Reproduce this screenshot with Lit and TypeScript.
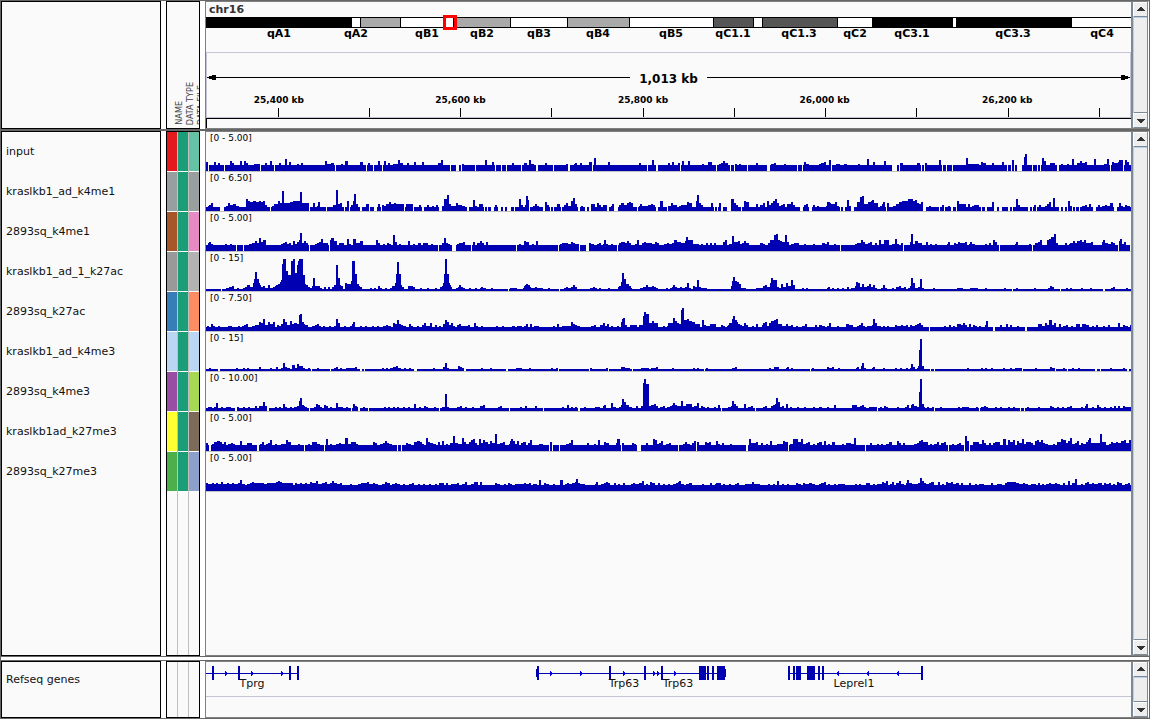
import { LitElement, html, svg, css } from "lit";
import { customElement, property } from "lit/decorators.js";

/** Width of the displayed locus in bins. */
const BINS = 925;
/** Signal bins are stored in three tiles; each starts at this bin. */
const TILE_START = [-6, 304, 614];
const pct = (x: number) => `${(x / BINS) * 100}%`;

interface Track {
  name: string;
  range: string;
  colors: string[];
  base: number;
  /** "bin:height[:width]" entries; a height of 0 is a gap in coverage. */
  tiles: string[];
}

const GREEN = "#1b9e77";

const TRACKS: Track[] = [
  {
    name: "input", range: "[0 - 5.00]", colors: ["#e41a1c", GREEN, "#66c2a5"], base: 6,
    tiles: [
      "6:9 8:0:1 14:9 18:8 24:0:1 30:10 32:8 40:10 44:10 46:8 54:7:6 60:0:1 65:8 70:10 74:0:1 79:8 85:12 89:9 97:7 101:8 125:10 128:7 131:8:3 135:0:1 141:7 145:10:3 160:9:3 166:0:1 168:8 173:0:1 178:10 182:0:1 184:10 188:8 193:7:6 198:11 201:8 207:8 214:9 222:9 238:8:3 241:11 250:0:1 256:0:3 261:0:1 262:7 275:0:1 285:11 292:9 295:0:1 301:0:1 306:0:1 312:8",
      "2:8 11:0:1 14:8:3 19:11 21:7:3 26:0:2 35:8 43:0:1 56:7 58:0:2 64:7 65:8 70:8 79:9:3 82:0:1 84:13 98:9 129:8 137:0:1 142:11 146:0:2 158:8 162:9 168:8 170:0:1 172:10 178:10 192:7 198:9:4 206:0:1 209:7 211:8 213:10 216:8 220:0:1 224:0:1 225:7 229:7 237:0:1 246:8 257:0:3 261:7 264:8 274:7 287:0:1 292:0:1 294:9 297:7 309:7 311:8 314:9 319:11",
      "1:8 4:9 9:11 11:0:1 16:7:4 24:7:3 38:7 47:12 53:9 64:10 72:0:5 79:0:1 80:8:3 97:8:3 101:0:1 104:0:1 105:8 119:11 122:0:1 126:0:1 132:0:1 146:13 148:7:11 161:9 164:8 172:8 182:9 187:0:1 191:0:1 192:11 194:0:1 197:0:5 204:14 205:17 212:0:1 217:0:1 220:0:1 222:13 224:10 230:8 233:8 237:0:2 241:7 247:7 252:12 257:8 260:10 263:8 265:9 274:12 284:7 287:12 290:0:1 292:9 295:8 298:9 299:11:4 303:0:1 305:11 307:9 309:6:2",
    ],
  },
  {
    name: "kraslkb1_ad_k4me1", range: "[0 - 6.50]", colors: ["#999e9f", GREEN, "#999e9f"], base: 4,
    tiles: [
      "8:5 9:6 11:8 20:0:4 26:5 28:8 31:6:3 33:7:3 36:5:3 46:12 48:10 50:9 53:10:3 56:9 58:6 59:10 61:9 63:10 65:6 70:0:1 72:5 74:7:4 78:10 80:8:2 82:20 84:8 87:8:3 90:9 93:10:3 96:7 97:10 100:19 102:8:6 107:8 109:0:1 113:8 117:5 118:9 126:0:1 133:6 136:21 138:7 140:8 144:0:1 147:10 149:0:1 151:6 153:10 154:17 156:7 160:0:2 166:7:3 169:0:1 174:0:3 178:7 181:0:1 182:6 184:5 186:7 189:9 191:7 194:8 196:7:8 204:0:1 206:7 209:7:4 213:0:1 219:6 222:0:2 227:6 232:5 236:6 239:0:3 242:5 244:12:3 247:16 249:7 252:5:5 256:8 257:6:5 263:5 267:0:2 273:11 275:5 279:7:4 284:0:1 287:0:1 291:0:3 295:6 298:0:3 303:0:2 307:0:4 314:0:1 319:12",
      "0:0:1 4:0:1 9:12 11:6 15:6 16:15 18:11 19:0:1 23:5 25:7 27:5 33:0:2 35:9 37:6 40:0:1 43:0:1 47:7:3 51:0:1 54:6 56:8 58:5 61:10 63:13 65:7:2 68:0:2 71:5 75:0:2 79:0:2 81:7:4 87:8 89:6 93:6:4 97:0:2 101:5 102:7 104:0:4 109:6 111:8:3 115:6 117:8 119:9 121:8 127:0:1 129:5 130:7 133:5:6 138:6 141:7 143:6 146:0:2 150:10:3 157:0:1 158:5 161:8 163:6:4 169:5 171:6:6 177:9 180:8 186:10 187:16 189:8 191:6 201:8 204:0:1 207:0:1 209:8 211:0:2 217:0:4 221:12:3 224:8 226:6 231:0:1 234:10 236:7 237:9 246:7 250:6 253:8 257:10 259:6 261:8 263:10 265:12 267:8 269:5 271:6 273:7 277:7 280:7 281:9 283:6 290:0:3 294:6 296:7 299:0:3 303:6 307:5 316:5 318:9",
      "7:9 9:8 12:7 15:9 17:5 20:0:1 23:0:2 27:11 29:5 31:0:3 37:9 40:14 42:15 44:7:2 46:7 48:9 51:10 52:11 54:8 56:8 60:5 62:7 63:9 66:0:1 67:8 73:5 76:7 78:6 79:9 81:7 82:10 85:10 88:12 91:12 93:10 95:11 97:8 99:7 101:9 103:0:3 109:5 119:0:1 122:6 124:0:1 128:5 131:0:2 136:0:1 137:10 139:7:7 148:7 152:5 154:6 157:6 161:0:1 165:0:2 172:9 174:0:3 179:0:3 188:0:2 192:0:1 196:12 198:6 208:0:2 212:0:1 214:6 216:0:1 219:6 225:5 227:7 229:9 233:13 235:4 239:0:2 243:0:2 247:0:1 248:10 250:5 252:0:1 255:0:1 259:0:1 262:5 265:6 269:7 273:0:3 278:6 282:5 285:6 287:5 290:8:3 294:0:3 299:8 301:5 305:6 308:5",
    ],
  },
  {
    name: "2893sq_k4me1", range: "[0 - 5.00]", colors: ["#a65628", GREEN, "#e78ac3"], base: 6,
    tiles: [
      "8:8 9:9 11:7 25:7 30:7 36:0:1 43:0:1 49:7 52:8:3 55:10 57:8 59:13 61:9 63:11:3 81:7 83:8 85:9 88:7 89:8 93:10 95:7 97:9 99:11 100:18 102:8 104:10 106:8 109:0:1 115:7 117:8 119:9 121:12 123:8 126:8 129:0:1 130:11 131:13:3 135:10 139:8 142:8 147:12 149:7 153:12:3 157:8 160:10:3 176:11 178:8 183:7 187:8 189:7 193:16 195:9 199:7 208:10 213:7 218:8:3 223:8 226:8 231:7 238:0:1 242:8 244:13 246:8 248:7 252:0:4 257:7 259:8:5 263:9 271:0:1 273:9 277:8 280:10 282:8 286:9 316:0:1",
      "6:0:1 9:7 14:10 17:9 22:7 26:10 48:0:1 50:7 52:8:2 54:8:4 59:7 61:9 63:8 65:7:4 69:0:1 76:0:3 79:8 82:7 87:7 89:8 93:7 94:11 96:7 101:7 107:0:1 109:8 111:9:4 116:8 117:10 119:8 125:7 127:11 132:8 134:9 136:8:6 143:7 145:9 147:8 154:7 157:8 160:7 162:8 164:11:3 167:9:4 171:8:4 175:10 176:14 178:11 181:11 183:7:6 191:7 196:8 200:8 204:8 213:9 215:11 219:7 222:15 224:9 226:9 228:10 230:7 232:8 234:10 237:8 250:8:3 253:7 258:8 260:11:3 264:16 266:17 268:11 270:10 272:9 275:16 277:9 281:7 284:8 287:8 294:7 303:7 312:8 315:7 317:9",
      "3:8 7:9 14:7 20:0:1 35:7 37:8 40:8 41:11 43:9 45:7 48:8 50:9 55:8 59:11 61:7 64:11 67:11 72:7:2 75:12 77:7 81:8 83:0:1 90:9 91:17 93:7 95:10:3 99:8:3 106:9 110:7 115:7 127:7 128:9 134:8 136:7 138:9 141:8:6 145:9 149:7 150:9 153:7 165:7 169:8 173:11 175:9 179:0:1 195:7 196:9 209:7 212:0:1 215:8 218:9 220:11 227:11 229:12 231:14 234:17 236:8 245:8 249:7 250:8 253:10 255:8 257:10 260:11 262:9 264:11 266:8:5 271:9 282:9 283:11 286:8 289:7 291:9 293:8 298:0:1 299:10 300:12 302:7 304:9 310:0:1",
    ],
  },
  {
    name: "kraslkb1_ad_1_k27ac", range: "[0 - 15]", colors: ["#999999", GREEN, "#b3b3b3"], base: 2,
    tiles: [
      "21:0:1 26:3 29:4 32:5 37:3 43:3 45:4 47:6:3 50:4 53:8 54:12 55:19 57:12 58:8 59:6 60:4 63:5 66:3 68:6 70:3 73:4 75:5 76:6 78:7 80:9 81:11 82:27 83:32:3 86:20 87:16:5 91:30 93:32:2 95:18 96:16 97:26 98:30 99:32:4 103:16 104:7 106:6 108:4 110:3 112:5 113:13 115:5 117:3 118:5 120:3 124:4 128:4 132:4 134:6 136:26 138:13 139:6 141:5 145:8 147:7 150:7 151:10 152:30:3 155:17 157:7 158:5 160:4 170:3 174:3 178:5 180:3 185:3 190:3 192:5 194:5 195:8 196:17 197:29 199:17 200:6 202:4 208:5 210:3 211:5 213:4 220:3 227:3 235:3 240:4 242:5 243:8 244:17 245:32 247:17 248:8 249:6 250:4 256:3 258:4 259:6 261:4 263:3 269:3 275:3 280:3 281:4 284:3 291:3 308:0:1 312:3",
      "0:3 5:3 13:3 14:5 15:6 16:7 18:6 19:4 21:3 24:3 25:4 28:3 31:3 38:3 49:0:1 54:3 56:4 59:3 61:4 63:6 65:4 80:3 83:4 85:3 89:3 98:3 108:4 109:5 111:9 112:18 114:12 115:5 117:7 119:5 120:3 130:3 133:4 135:4 136:6 139:4 141:3 142:5 144:4 146:3 156:3 160:3 162:4 163:6 165:4 167:3 170:4 172:3 175:4 177:8 179:3 183:5 186:4 187:11 189:4 192:3 195:3 221:5 222:10 223:14 225:10 227:9 229:7 230:3:6 246:3 249:3 252:3 253:5 255:6 257:4 259:3 260:8 261:13 263:8 264:11:3 267:4 269:3 271:7 273:4 275:4 276:8 278:5 280:5 281:11 283:6 292:3 296:3 317:3 318:4",
      "7:3 8:4 12:3 17:3 22:3 27:4 31:3 34:3 35:5 36:9 38:8 40:4 42:7 44:4 47:5 49:7 51:4 53:6 55:3 61:3 63:6 65:3 72:3 76:4 79:5 81:3 84:4 88:3 90:5 91:13 93:8 95:3 98:4 100:12 102:3 113:3 137:3:6 150:3:5 156:3 165:3 184:3 192:0:1 196:3 214:3 228:3 230:5 232:4 240:0:1 246:3 250:3 261:3 270:3 283:0:2 291:3 293:4 306:3",
    ],
  },
  {
    name: "2893sq_k27ac", range: "[0 - 7.50]", colors: ["#377eb8", GREEN, "#fc8d62"], base: 4,
    tiles: [
      "7:5 11:7 13:5 18:5 28:5:4 38:5 42:5 44:6 46:7 52:5 55:6 57:6 59:9 61:8 63:12 65:6 68:9 71:7 73:9 77:6 79:5 81:7 83:12 85:9 87:6 90:10 92:7 94:8:3 97:7 99:16 100:17 102:9 103:7 105:6:3 112:5 115:6 117:7 119:5 123:5 129:5 134:5 136:12 138:8 144:5 150:5 152:7 153:9 160:5 165:5 172:5 177:5 183:5 186:6 189:5 193:8 195:7 197:11 199:7 201:6 204:5 209:7 211:5 217:5 222:6 224:8 227:5 230:8 235:6 239:5 243:7 245:11 247:9 250:6 251:8 253:5 257:6 259:7 262:5 265:5 268:6 274:8 276:5 281:5 296:5 302:5 313:5 317:5",
      "2:5 7:5:5 14:5 16:7 20:7 24:5 27:5 43:5 47:7 52:5 55:5 58:5 61:9 63:7 65:6 68:5 81:5 84:6 90:6 93:8 95:5 97:7 101:5 107:5 111:9 112:12 113:13 115:6 120:6 122:6 125:6 129:6 131:6 133:15 134:19 136:17:3 139:8 142:10 144:8 146:8 153:5 157:5 158:8 160:8 162:8 163:13 165:10 167:8 169:7 171:21 172:23 174:11 175:8 177:12 179:7 180:10 182:6 183:9 185:7:5 192:11 194:6 197:5 200:7 202:5 203:7:3 211:6 213:5 217:5 218:6 219:8 221:8 222:12 223:15 225:11 226:9 228:7 230:6 232:5 234:8 236:6 242:5 246:7 252:6 253:8 255:9 257:5 259:8 261:10 263:6 264:11 266:12 268:7 270:7 273:5 276:7 278:5 281:6 286:5 292:5 295:7 305:6 309:6 313:5 319:8",
      "0:6 3:5 7:5 9:8 17:5 26:7:3 29:6 31:6 37:5 39:6 41:8 43:5 47:5 50:5 52:6 53:12 55:8 56:5 59:5 63:5 67:5 75:6 78:5 81:6 84:5 86:6 90:6 93:5 95:6 97:7 99:8 101:6 109:0:1 124:5 129:6 133:5 137:7:4 141:6 143:8 145:6 149:7 153:6 155:5 159:5 165:6 166:10 173:0:2 180:6 186:7 190:6 197:5 205:0:2 218:7:4 222:5 225:8 227:6 229:11:3 232:6 234:8 239:7 243:5 246:6 251:5 256:7:4 262:7:4 267:6 272:5 276:6 283:5 288:6 298:8 303:6 306:5 310:6",
    ],
  },
  {
    name: "kraslkb1_ad_k4me3", range: "[0 - 15]", colors: ["#bad6f3", GREEN, "#bad6f3"], base: 2,
    tiles: [
      "9:3 18:0:2 36:3 43:3 47:3 59:4 70:3 76:4 81:3 83:8 85:4 88:3 92:6:3 95:3 97:7 99:5:4 103:3 108:3 111:0:1 117:3 130:0:1 134:3 136:4 140:3 146:3 148:3 151:3 153:3 155:4 160:0:2 164:0:1 182:3 186:3 190:3 193:4 196:5 199:3 204:3 209:3 214:0:3 233:3 243:4 245:8 247:3 258:5 260:4 262:3 264:0:2 281:3 290:3 306:0:2 317:3",
      "6:3 10:3 19:3 41:3 46:3 48:0:1 79:0:1 80:3 96:3 98:0:1 111:4:4 116:3:4 122:0:1 131:3 134:3 137:3 141:3 143:3 146:4 162:3 183:3 187:3 194:0:1 196:3 222:3 225:4 259:3 264:4:5 276:3 277:4 281:3 300:0:1 302:3 317:4",
      "7:4 10:3 12:4 18:3 36:3 37:4 41:5 42:8 44:3 52:3 53:4 63:3 75:3 80:3 86:3 90:3 91:7 93:4 97:3 98:5 99:21 100:32:2 102:5 103:2 110:0:1 114:0:1 147:3 161:3 165:3 171:3 183:3 190:3 195:3:7 202:0:1 215:3 230:4 233:3 235:0:1 243:3 247:0:1 252:3 258:3 275:0:2 280:0:1 290:3 303:3 307:0:2",
    ],
  },
  {
    name: "2893sq_k4me3", range: "[0 - 10.00]", colors: ["#984ea3", GREEN, "#a6d854"], base: 3,
    tiles: [
      "8:4 10:4 14:4 16:8 21:4 26:4 29:4 35:0:2 37:4 43:4 48:4 55:5 59:5 61:5 63:9 65:5 67:0:2 75:4 79:4 83:7 85:4 90:4 94:4 97:5 99:10 100:13 102:6 103:5 105:4 109:0:1 114:4 116:7 118:6 120:4 124:6 126:5 130:4 136:8 138:4 141:4 146:4 151:0:1 153:7 155:5 157:4 158:0:2 163:4 168:0:1 184:4 188:4 193:4 197:4 203:4 208:4 214:7 219:4 224:5 226:4 234:4 239:0:1 242:4 245:17 247:4 257:4 260:5 265:4 272:4 280:5 283:6 298:4 300:5 309:0:1",
      "10:4 15:5 25:5 33:0:1 52:4 57:6 61:4 65:4 68:0:2 74:4 85:4 88:4 93:5 94:6 101:8 104:4 109:4 111:6 112:12 114:9 115:6 117:6 120:4 126:5 131:5 133:28 134:32 136:27:3 139:5 141:6 144:7 146:5 150:4 153:5 157:4 160:5 162:6 163:8 165:6 167:5 170:5 171:10 173:5 176:7:6 182:4 184:5 187:8 191:5 193:4 197:4 204:4 208:6 211:0:1 218:4 221:5 222:10 224:7 226:5 234:7 238:4 241:5 245:0:1 253:4 255:5 261:5 263:6 265:7 266:13 268:9 269:4 272:5 276:7 280:4 287:4 294:4 303:4 309:4 317:4",
      "0:4 7:4 14:6 32:6 35:6 37:4 40:5 42:6 44:4 49:4:8 57:0:1 60:4 64:5 66:4 77:4 85:4 87:6 91:6 92:7 95:5 97:4 99:19 100:32:2 102:7 103:4 107:4 112:4 114:0:1 120:4 138:4 142:4 145:4 147:4 156:4 159:0:1 161:4 164:5 166:4 175:4 180:4 188:4 193:4 200:0:1 204:0:1 207:4 218:4 230:5 232:4 237:4 242:4 247:4 250:5 261:4 265:5 266:7 272:4 277:6 279:4 284:4 290:4 294:5 298:5 303:5 306:4 309:4",
    ],
  },
  {
    name: "kraslkb1ad_k27me3", range: "[0 - 5.00]", colors: ["#ffff33", GREEN, "#7d6b59"], base: 6,
    tiles: [
      "6:8 9:0:2 12:7 14:9 17:10:3 20:9 22:7 24:9 28:7 31:8 33:7 40:10 47:8 50:8 57:0:2 60:7 62:9 66:7 68:8 70:11 75:7 81:7 83:7 86:11 88:9:3 98:7 104:0:1 108:7 112:9:5 118:7 124:0:1 126:12 130:7 136:7 139:8 142:7 145:13:3 148:7 151:9 154:9 156:7 173:9 175:8 180:7 183:8 185:10 187:8 190:7 197:0:1 201:0:1 206:8 209:7 214:9 217:10:3 220:9 222:7 226:13 228:9 231:8 234:7 238:9:2 242:10 246:7 250:8 253:15 256:8 259:7 262:13 264:9 267:7 269:9 271:11 273:12 275:8 279:12 281:8 283:11 286:9 288:7 290:10 292:8 295:17 297:7 300:8 303:9 309:7 311:12 313:10 317:10",
      "0:10 3:9 5:7 7:8 11:8 13:9:3 18:8 20:11 29:7:4 39:0:1 40:9 42:0:1 49:0:1 56:7 59:8 61:11 77:8 84:7 88:11 94:9 97:8 106:8 107:12:3 111:0:1 112:8 122:8 124:7 127:0:4 136:8 143:12 145:11 147:7 149:8 151:10 156:7 159:8 168:0:1 173:7 175:9 178:7 182:8 184:10 186:0:1 187:9 195:9 197:8 199:9 206:10 208:7 212:8 220:7 236:0:2 239:12 241:8 244:8 246:9 251:8 256:7 260:10 267:7 270:7 273:10 276:9 278:0:1 280:7 283:12 286:12 288:9 291:12 294:7 296:8 298:9 303:7 307:8 309:9 314:10 318:7",
      "0:9 4:10 12:9:3 22:7 26:8 29:8 32:7 34:13 45:0:1 50:8 57:7 61:7 66:7 69:9:3 77:10 79:8 83:8 94:7 97:8 99:10 101:11 103:9:5 110:7 114:7 117:9 121:8 124:9 128:0:1 132:7 137:7 139:8 144:0:1 145:15 147:10 149:0:1 153:9:4 157:9 160:7 162:11 164:8 169:8 173:8 175:9 178:9 183:12:3 188:11 191:9 193:11 197:10 200:8 202:12 204:7 206:9 209:9 211:8 215:10 217:11 219:9 221:11 223:8 226:7 233:7 237:9 239:9 241:12 244:11 246:8 248:10 250:13 252:7 255:8 257:10 261:8 264:7 266:9 268:11 269:13 271:8:8 280:17 282:9 284:9 289:7 291:9 294:8 296:9 299:8 301:10 304:11 306:8 309:11",
    ],
  },
  {
    name: "2893sq_k27me3", range: "[0 - 5.00]", colors: ["#4daf4a", GREEN, "#8da0cb"], base: 6,
    tiles: [
      "6:8 9:7 12:8 14:7 16:8 19:7 21:9 24:7 27:8 29:7 32:8 35:7 38:8 40:11 43:7 47:7 50:8 52:9 55:8:3 59:8 62:8 65:7 67:8 70:8 73:8 76:9 78:10 80:9 83:8 85:8:8 95:8 98:7 100:8 102:7 105:8 108:7 110:9 113:8 116:10 119:7 122:8 125:9 128:7 130:8 132:10 135:8 137:7 140:8 150:7 158:7 161:8 164:8 167:9 170:7 173:8 176:7 182:7 185:9 188:8 192:7 195:8 198:7 203:7 209:7 212:8 218:7 223:7 229:7 235:7 239:8 242:8 246:8 251:7 254:7 257:8 262:7 265:9 271:7 274:9 276:9 280:9 295:8 298:7 304:7 308:8 315:7 318:7",
      "0:7 7:7:8 14:8 17:7 19:8 23:7 25:7 29:11 34:8 37:7 43:7 50:11:3 55:7 57:8 60:7 62:8 65:9 66:12 68:8 70:7 73:7 85:7 86:9 91:7 94:8 96:9 98:8 104:8 108:7 113:8 121:7 123:8 126:7 129:8 132:10 136:7 140:9 143:8 148:8 153:7 158:7 163:7 166:8 168:9 169:10 172:7 176:7 179:8:3 192:7 200:8 205:7 206:8 209:8 213:7 219:7 225:7 227:8 235:7:5 240:7 242:9 245:7 248:7 258:7 263:7 267:10 272:7 277:7 286:8 289:7 293:8 296:7 299:8:3 303:7 309:7 311:8 314:9 318:7",
      "1:7 3:8 4:9 14:7 18:7 20:7 23:7 35:7 39:7 46:8:4 53:7 57:7 60:7 62:9 65:8 66:10 70:7 72:9 76:8 79:10 82:7 86:8 87:11 90:8 93:7 96:7 98:8 100:13 102:10 104:8 106:7 109:8 111:9:3 118:9 122:7 126:9 129:8 131:9 134:7 136:8:3 141:8 149:8 155:7 159:7 162:7 171:8 177:7 180:7 185:8 187:9:4 192:9:4 195:7 197:8 200:7 203:8 206:7 211:7 214:7 218:8 222:7 226:7 229:8 232:7 235:8 238:7 243:8 248:10 252:8 255:12 261:7 265:8 267:9 270:7 272:8 275:7 278:8:4 284:8 286:7 289:8 293:7 297:9 300:8 305:7 308:8",
    ],
  },
];

function coverage(track: Track): string {
  const heights = new Array<number>(BINS).fill(track.base);
  track.tiles.forEach((tile, t) => {
    for (const entry of tile.split(" ")) {
      const [x, h, w = 2] = entry.split(":").map(Number);
      for (let i = 0; i < w; i++) {
        const bin = x + TILE_START[t] + i;
        if (bin < 0 || bin >= BINS) continue;
        heights[bin] = h === 0 ? 0 : heights[bin] === 0 ? h : Math.max(heights[bin], h);
      }
    }
  });
  // Join neighbouring peaks that are separated by a single bin.
  for (let i = 1; i < BINS - 1; i++) {
    const level = Math.min(heights[i - 1], heights[i + 1]);
    if (heights[i] > 0 && heights[i] < level) heights[i] = level;
  }
  return "M0 39" + heights.map((h, i) => `V${39 - h}H${i + 1}`).join("") + "V39Z";
}

const BANDS: [number, number, string][] = [
  [0, 146, "#000"], [154, 41, "#a9a9a9"], [247, 58, "#a9a9a9"], [361, 63, "#a9a9a9"],
  [507, 41, "#555"], [556, 76, "#555"], [666, 81, "#000"], [750, 116, "#000"],
];
const BAND_EDGES = [154, 194, 247, 304, 361, 423, 507, 547, 556, 631];
const BAND_LABELS: [number, string][] = [
  [73, "qA1"], [150, "qA2"], [221, "qB1"], [276, "qB2"], [333, "qB3"], [392, "qB4"], [465, "qB5"],
  [527, "qC1.1"], [593, "qC1.3"], [649, "qC2"], [706, "qC3.1"], [807, "qC3.3"], [896, "qC4"],
];
const TICKS = [72, 163, 254, 345, 437, 528, 619, 710, 802, 893];
const TICK_LABELS: [number, string][] = [
  [72, "25,400 kb"], [254, "25,600 kb"], [437, "25,800 kb"], [619, "26,000 kb"], [802, "26,200 kb"],
];

interface Gene {
  start: number;
  end: number;
  exons: [number, number][];
  thin?: [number, number][];
  arrows: number[];
  dir: 1 | -1;
  labels: [number, string][];
}
const GENES: Gene[] = [
  {
    start: 0, end: 93, dir: 1, arrows: [20, 46, 76], labels: [[46, "Tprg"]],
    exons: [[6, 2], [32, 2], [83, 2], [91, 2]],
  },
  {
    start: 330, end: 520, dir: 1, arrows: [345, 375, 418, 448, 452, 469], labels: [[418, "Trp63"], [472, "Trp63"]],
    exons: [[331, 2], [403, 2], [438, 2], [455, 2], [493, 7], [501, 2], [506, 2], [511, 8]],
    thin: [[330, 1], [519, 1]],
  },
  {
    start: 582, end: 717, dir: -1, arrows: [632, 662, 692], labels: [[648, "Leprel1"]],
    exons: [[582, 2], [587, 2], [590, 5], [601, 8], [612, 2], [616, 2], [715, 2]],
  },
];

@customElement("scroll-bar")
export class ScrollBar extends LitElement {
  @property() label = "";
  static styles = css`
    :host {
      display: flex;
      flex-direction: column;
      box-sizing: border-box;
      border: solid #808080;
      border-width: 1px 0;
      background: #7a8a99;
      padding: 0 1px 0 2px;
      border-right: 1px solid #fff;
    }
    button {
      display: grid;
      justify-content: center;
      align-content: start;
      box-sizing: border-box;
      flex: none;
      height: 15px;
      padding: 4px 0 0;
      border: solid;
      border-width: 1px 0 1px 1px;
      border-color: #fff #fff #7a8a99 #fff;
      border-radius: 0;
      background: #eee;
    }
    .down {
      height: 16px;
      padding-top: 6px;
      border-top-color: #7a8a99;
      box-shadow: inset 0 1px #fff;
    }
    .thumb {
      flex: 1;
      border: solid #b8cfe5;
      border-width: 1px 0 0 1px;
      background: #eee;
    }
    svg { display: block; fill: #333; }
  `;
  render() {
    return html`
      <button class="up" aria-label="Scroll ${this.label} up">
        <svg width="8" height="4" shape-rendering="crispEdges"><path d="M3 0h2v1h1v1h1v1h1v1H0V3h1V2h1V1h1z" /></svg>
      </button>
      <div class="thumb"></div>
      <button class="down" aria-label="Scroll ${this.label} down">
        <svg width="8" height="4" shape-rendering="crispEdges"><path d="M0 0h8v1H7v1H6v1H5v1H3V3H2V2H1V1H0z" /></svg>
      </button>
    `;
  }
}

@customElement("app-root")
export class AppRoot extends LitElement {
  static styles = css`
    :host {
      display: flex;
      flex-direction: column;
      box-sizing: border-box;
      height: 100vh;
      border: 1px solid #666;
      background: #fff;
      color: #111;
      font: 11px/14px "DejaVu Sans", sans-serif;
    }
    .panel {
      display: grid;
      grid-template-columns: 160px 34px minmax(0, 1fr) 18px;
    }
    .head { height: 128px; border-bottom: 2px solid #666; }
    .main { flex: 1; min-height: 0; border-bottom: 1px solid #666; }
    .foot { height: 57px; margin-top: 3px; border-top: 1px solid #666; }
    .box {
      box-sizing: border-box;
      border: 1px solid #000;
      background: #fafafa;
      overflow: hidden;
    }
    .attrs { margin-left: 5px; margin-right: -5px; }
    .data {
      box-sizing: border-box;
      margin-left: 10px;
      border: solid #808080;
      border-width: 1px 0 1px 1px;
      background: #fafafa;
      overflow: hidden;
    }
    .name {
      display: flex;
      align-items: center;
      box-sizing: border-box;
      height: 40px;
      padding-left: 4px;
    }
    .foot .name { height: 36px; }
    .columns {
      display: grid;
      grid-template-columns: repeat(3, 10px);
      gap: 1px;
      height: 100%;
      background: linear-gradient(#c0c0c0, #c0c0c0) 10px 0 / 1px 100% no-repeat,
        linear-gradient(#c0c0c0, #c0c0c0) 21px 0 / 1px 100% no-repeat;
    }
    .cell { height: 39px; border-bottom: 1px solid #fff; }
    .heads {
      box-sizing: border-box;
      align-items: end;
      padding: 0 0 3px 7px;
      background: none;
    }
    .heads span {
      justify-self: center;
      writing-mode: vertical-rl;
      transform: rotate(180deg);
      white-space: nowrap;
      font: 9px/10px "DejaVu Sans Condensed", "DejaVu Sans", sans-serif;
      color: #444;
    }
    svg { display: block; width: 100%; overflow: hidden; }
    .ideogram { height: 50px; }
    .ruler { height: 66px; box-sizing: border-box; border: 1px solid #c4c4d4; }
    .origin { height: 9px; border: solid #000; border-width: 1px 0 0 1px; }
    .shapes { shape-rendering: crispEdges; }
    .bold { font-weight: bold; fill: #000; text-anchor: middle; }
    .chrom { font-weight: bold; fill: #333; }
    .span { font-size: 12px; }
    .small { font-size: 9px; }
    .track { height: 39px; border-bottom: 1px solid #c0c0c0; }
    .signal { fill: #0000b2; }
    .range { font-size: 9px; fill: #000; }
    .genes { height: 34px; border-bottom: 1px solid #c4c4d4; }
    .gene-name { text-anchor: middle; fill: #111; }
    .arrow { fill: none; stroke: #0000ff; }
  `;

  private ideogram() {
    return html`<svg class="ideogram" role="img" aria-label="Chromosome 16 ideogram">
      <text class="chrom" x="3" y="11">chr16</text>
      <svg class="shapes" y="15" height="11" viewBox="0 0 ${BINS} 11" preserveAspectRatio="none">
        <rect width=${BINS} height="11" fill="#000" />
        <rect y="1" width=${BINS} height="9" fill="#fff" />
        ${BANDS.map(([x, w, c]) => svg`<rect x=${x} y="1" width=${w} height="9" fill=${c} />`)}
        ${BAND_EDGES.map((x) => svg`<rect x=${x} width="1" height="11" fill="#000" />`)}
      </svg>
      ${BAND_LABELS.map(([x, t]) => svg`<text class="bold" x=${pct(x)} y="35">${t}</text>`)}
      <svg x=${pct(237)} y="13" width="14" height="15">
        <rect x="1.5" y="1.5" width="11" height="12" fill="none" stroke="#f00" stroke-width="3" />
      </svg>
    </svg>`;
  }

  private ruler() {
    return html`<svg class="ruler" role="img" aria-label="Genomic ruler">
        <svg class="shapes" height="64" viewBox="1 0 923 64" preserveAspectRatio="none">
          <path d="M4 24h420v1H4zM501 24h420v1H501z" />
          <path d="M1 24h2v-1h3v-1h4v5H6v-1H3v-1H1zM924 24h-2v-1h-3v-1h-4v5h4v-1h3v-1h2z" />
          ${TICKS.map((x) => svg`<rect x=${x} y="55" width="1" height="9" />`)}
        </svg>
        <text class="bold span" x="50%" y="30">1,013 kb</text>
        ${TICK_LABELS.map(([x, t]) => svg`<text class="bold small" x=${pct(x)} y="50">${t}</text>`)}
      </svg>
      <div class="origin"></div>`;
  }

  private genes() {
    return html`<svg class="genes" role="img" aria-label="Refseq genes">
      <svg class="shapes" height="34" viewBox="0 0 ${BINS} 34" preserveAspectRatio="none">
        ${GENES.map((g) => svg`
          <rect class="signal" x=${g.start} y="11" width=${g.end - g.start} height="1" />
          ${g.exons.map(([x, w]) => svg`<rect class="signal" x=${x} y="4" width=${w} height="14" />`)}
          ${(g.thin ?? []).map(([x, w]) => svg`<rect class="signal" x=${x} y="7" width=${w} height="8" />`)}
          ${g.arrows.map((x) => svg`<path class="arrow" d="M${x - g.dir} 9.5l${2 * g.dir} 2l${-2 * g.dir} 2" />`)}
        `)}
      </svg>
      ${GENES.flatMap((g) => g.labels).map(([x, t]) => svg`<text class="gene-name" x=${pct(x)} y="25">${t}</text>`)}
    </svg>`;
  }

  render() {
    return html`
      <header class="panel head">
        <div class="box"></div>
        <div class="box attrs">
          <div class="columns heads"><span>NAME</span><span>DATA TYPE</span><span>DATA FILE</span></div>
        </div>
        <div class="data">${this.ideogram()}${this.ruler()}<!-- --></div>
        <scroll-bar label="header"></scroll-bar>
      </header>
      <main class="panel main">
        <div class="box">${TRACKS.map((t) => html`<div class="name">${t.name}</div>`)}</div>
        <div class="box attrs">
          <div class="columns">
            ${[0, 1, 2].map((c) => html`<div>
              ${TRACKS.map((t) => html`<div class="cell" style="background-color:${t.colors[c]}"></div>`)}
            </div>`)}
          </div>
        </div>
        <div class="data">
          ${TRACKS.map((t) => html`<svg class="track" role="img" aria-label="${t.name} coverage">
            <svg class="shapes" height="39" viewBox="0 0 ${BINS} 39" preserveAspectRatio="none">
              <path class="signal" d=${coverage(t)} />
            </svg>
            <text class="range" x="4" y="9">${t.range}</text>
          </svg>`)}
        </div>
        <scroll-bar label="tracks"></scroll-bar>
      </main>
      <footer class="panel foot">
        <div class="box"><div class="name">Refseq genes</div></div>
        <div class="box attrs"><div class="columns"></div></div>
        <div class="data">${this.genes()}</div>
        <scroll-bar label="genes"></scroll-bar>
      </footer>
    `;
  }
}
